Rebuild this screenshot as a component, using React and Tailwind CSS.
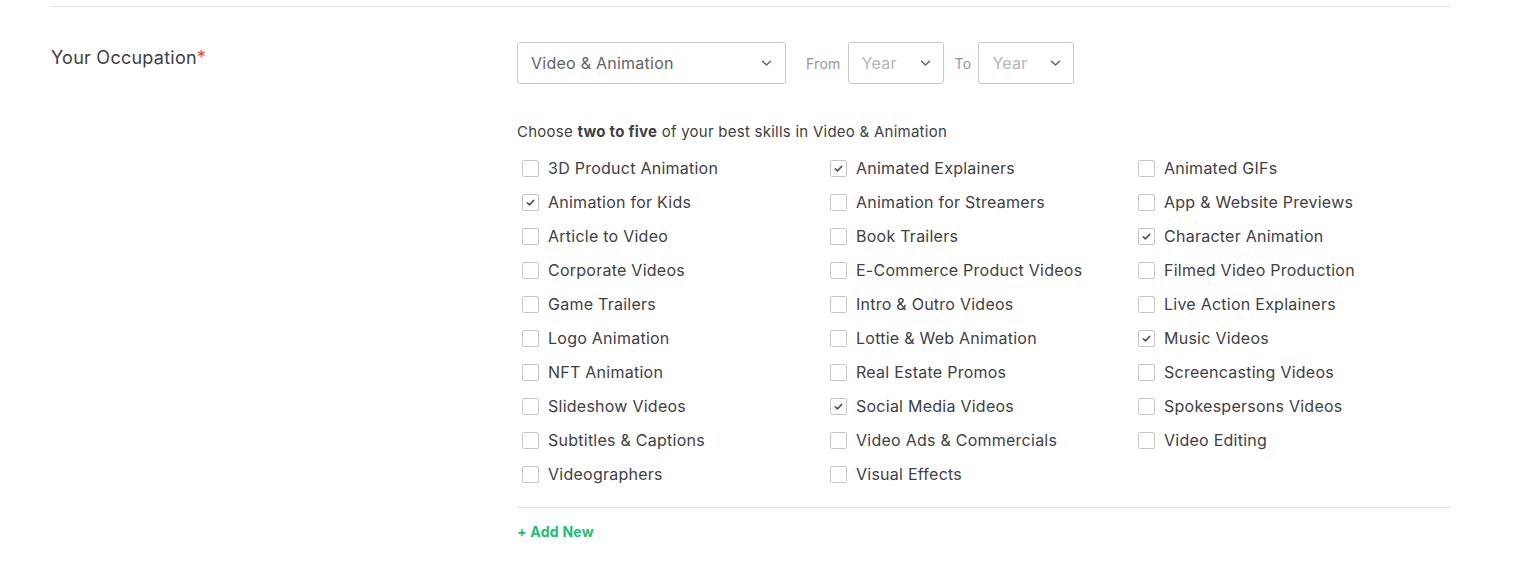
import React from "react";

const items = [
  ["3D Product Animation", false], ["Animated Explainers", true], ["Animated GIFs", false],
  ["Animation for Kids", true], ["Animation for Streamers", false], ["App & Website Previews", false],
  ["Article to Video", false], ["Book Trailers", false], ["Character Animation", true],
  ["Corporate Videos", false], ["E-Commerce Product Videos", false], ["Filmed Video Production", false],
  ["Game Trailers", false], ["Intro & Outro Videos", false], ["Live Action Explainers", false],
  ["Logo Animation", false], ["Lottie & Web Animation", false], ["Music Videos", true],
  ["NFT Animation", false], ["Real Estate Promos", false], ["Screencasting Videos", false],
  ["Slideshow Videos", false], ["Social Media Videos", true], ["Spokespersons Videos", false],
  ["Subtitles & Captions", false], ["Video Ads & Commercials", false], ["Video Editing", false],
  ["Videographers", false], ["Visual Effects", false],
];

function Chevron() {
  return (
    <svg width="11" height="10" viewBox="0 0 11 10" fill="none">
      <path d="M1.5 3.2 L5.5 7 L9.5 3.2" stroke="#62646a" strokeWidth="1.5" strokeLinecap="round" strokeLinejoin="round" />
    </svg>
  );
}

function Check({ on }) {
  return (
    <span className="w-[17px] h-[17px] border border-[#c5c6c9] rounded-[2px] bg-white flex items-center justify-center shrink-0">
      {on && (
        <svg width="11" height="11" viewBox="0 0 11 11" fill="none">
          <path d="M2.3 5.8 L4.5 7.9 L8.7 3.4" stroke="#55575c" strokeWidth="1.6" strokeLinecap="round" strokeLinejoin="round" />
        </svg>
      )}
    </span>
  );
}

export default function App() {
  return (
    <div className="bg-white w-[1524px] h-[565px] font-['Inter',sans-serif] text-[#404145] tracking-[0.25px]">
      <div className="ml-[51px] w-[1400px] border-t border-[#e4e5e7] mt-[6px]" />
      <div className="flex ml-[51px] w-[1400px] pt-[35px]">
        <div className="w-[466px] text-[18px] leading-[30px] pt-[1px]">
          Your Occupation<span className="text-[#e0474c]">*</span>
        </div>
        <div className="flex-1">
          <div className="flex items-center h-[42px]">
            <div className="w-[269px] h-[42px] border border-[#c5c6c9] rounded-[3px] flex items-center justify-between pl-[13px] pr-[13px] text-[16px] text-[#62646a]">
              <span>Video &amp; Animation</span>
              <Chevron />
            </div>
            <span className="ml-[20px] mr-[7px] text-[14px] text-[#95979d]">From</span>
            <div className="w-[96px] h-[42px] border border-[#c5c6c9] rounded-[3px] flex items-center justify-between pl-[13px] pr-[12px] text-[16px] text-[#b5b6ba]">
              <span>Year</span>
              <Chevron />
            </div>
            <span className="ml-[11px] mr-[7px] text-[14px] text-[#95979d]">To</span>
            <div className="w-[96px] h-[42px] border border-[#c5c6c9] rounded-[3px] flex items-center justify-between pl-[13px] pr-[12px] text-[16px] text-[#b5b6ba]">
              <span>Year</span>
              <Chevron />
            </div>
          </div>
          <div className="mt-[37px] text-[15px] leading-[22px] text-[#404145]">
            Choose <b className="font-bold">two to five</b> of your best skills in Video &amp; Animation
          </div>
          <div className="grid grid-cols-[308px_308px_1fr] mt-[8px] pl-[5px]">
            {items.map(([label, on]) => (
              <div key={label} className="flex items-center h-[34px] gap-[9px]">
                <Check on={on} />
                <span className="text-[16px] text-[#404145]">{label}</span>
              </div>
            ))}
          </div>
          <div className="border-t border-[#e4e5e7] mt-[16px]" />
          <div className="mt-[13px] text-[14px] font-bold text-[#1dbf73]">+ Add New</div>
        </div>
      </div>
    </div>
  );
}
